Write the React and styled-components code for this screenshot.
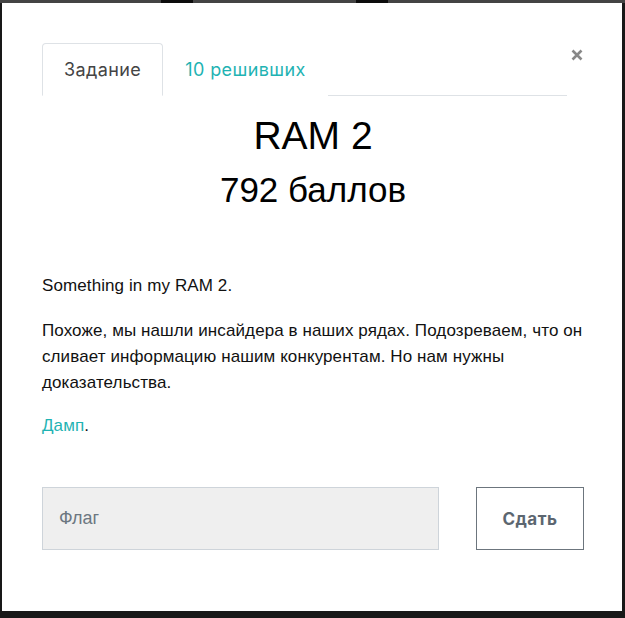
import React from 'react';
import styled, { createGlobalStyle } from 'styled-components';

const GlobalStyle = createGlobalStyle`
  html, body {
    margin: 0;
    padding: 0;
    background-color: #141414;
  }
  * {
    box-sizing: border-box;
  }
`;

const Backdrop = styled.div`
  min-height: 618px;
  padding: 3px 3px 7px 2px;
  background-color: #181818;
  background-image:
    linear-gradient(
      to right,
      #444 161px,
      #0c0c0c 161px,
      #0c0c0c 193px,
      #444 193px,
      #444 356px,
      #0c0c0c 356px,
      #0c0c0c 388px,
      #444 388px
    );
  background-size: 100% 3px;
  background-repeat: no-repeat;
`;

const Modal = styled.div`
  position: relative;
  width: 620px;
  height: 608px;
  padding: 40px 38px 0 40px;
  background-color: #fff;
  font-family: 'Liberation Sans', Arial, sans-serif;
`;

const CloseBtn = styled.button`
  position: absolute;
  top: 43px;
  right: 36px;
  width: 18px;
  height: 18px;
  padding: 0;
  border: none;
  background: none;
  cursor: pointer;
  display: flex;
  align-items: center;
  justify-content: center;
`;

const TabList = styled.div`
  display: flex;
  margin-right: 17px;
  border-bottom: 1px solid #dee2e6;
`;

const Tab = styled.div`
  margin-bottom: -1px;
  padding: 0 21px;
  height: 53px;
  display: flex;
  align-items: center;
  font-family: Inter, 'Open Sans', sans-serif;
  font-size: 18px;
  letter-spacing: 0.4px;
  color: ${({ active }) => (active ? '#444' : '#1fb3b3')};
  background: #fff;
  border: 1px solid ${({ active }) => (active ? '#dee2e6' : 'transparent')};
  border-bottom-color: ${({ active }) => (active ? '#fff' : 'transparent')};
  border-radius: 4px 4px 0 0;
`;

const Title = styled.h2`
  margin: 16px 0 0;
  text-align: center;
  font-weight: 400;
  font-size: 39px;
  line-height: 48px;
  color: #000;
`;

const Points = styled.h3`
  margin: 9px 0 0;
  text-align: center;
  font-weight: 400;
  font-size: 35px;
  line-height: 41px;
  color: #000;
`;

const Desc = styled.div`
  margin-top: 63px;
`;

const Paragraph = styled.p`
  margin: 0 0 ${({ gap }) => gap}px;
  font-size: 17px;
  letter-spacing: 0.1px;
  line-height: 26px;
  color: #111;
`;

const Link = styled.a`
  color: #1fb3b3;
  text-decoration: none;
`;

const FlagForm = styled.form`
  display: flex;
  gap: 37px;
  margin-top: 48px;
`;

const FlagInput = styled.input`
  width: 397px;
  height: 63px;
  padding: 0 16px;
  border: 1px solid #ced4da;
  background-color: #efefef;
  font-family: 'Liberation Sans', Arial, sans-serif;
  font-size: 18px;
  color: #333;
  outline: none;

  &::placeholder {
    color: #6c7781;
  }
`;

const SubmitBtn = styled.button`
  width: 108px;
  height: 63px;
  border: 1px solid #6c757d;
  background: #fff;
  font-family: Inter, 'Open Sans', sans-serif;
  font-weight: 700;
  font-size: 17px;
  letter-spacing: 0.5px;
  color: #5c6670;
  cursor: pointer;
`;

const App = () => (
  <>
    <GlobalStyle />
    <Backdrop>
      <Modal>
        <CloseBtn aria-label="Закрыть">
          <svg width="12" height="12" viewBox="0 0 12 12">
            <path d="M1.5 1.5 L10.5 10.5 M10.5 1.5 L1.5 10.5" stroke="#888" strokeWidth="2.6" />
          </svg>
        </CloseBtn>
        <TabList>
          <Tab active>Задание</Tab>
          <Tab>10 решивших</Tab>
        </TabList>
        <Title>RAM 2</Title>
        <Points>792 баллов</Points>
        <Desc>
          <Paragraph gap={19}>Something in my RAM 2.</Paragraph>
          <Paragraph gap={17}>
            Похоже, мы нашли инсайдера в наших рядах. Подозреваем, что он
            сливает информацию нашим конкурентам. Но нам нужны доказательства.
          </Paragraph>
          <Paragraph gap={0}>
            <Link href="#">Дамп</Link>.
          </Paragraph>
        </Desc>
        <FlagForm onSubmit={(e) => e.preventDefault()}>
          <FlagInput placeholder="Флаг" />
          <SubmitBtn type="submit">Сдать</SubmitBtn>
        </FlagForm>
      </Modal>
    </Backdrop>
  </>
);

export default App;
